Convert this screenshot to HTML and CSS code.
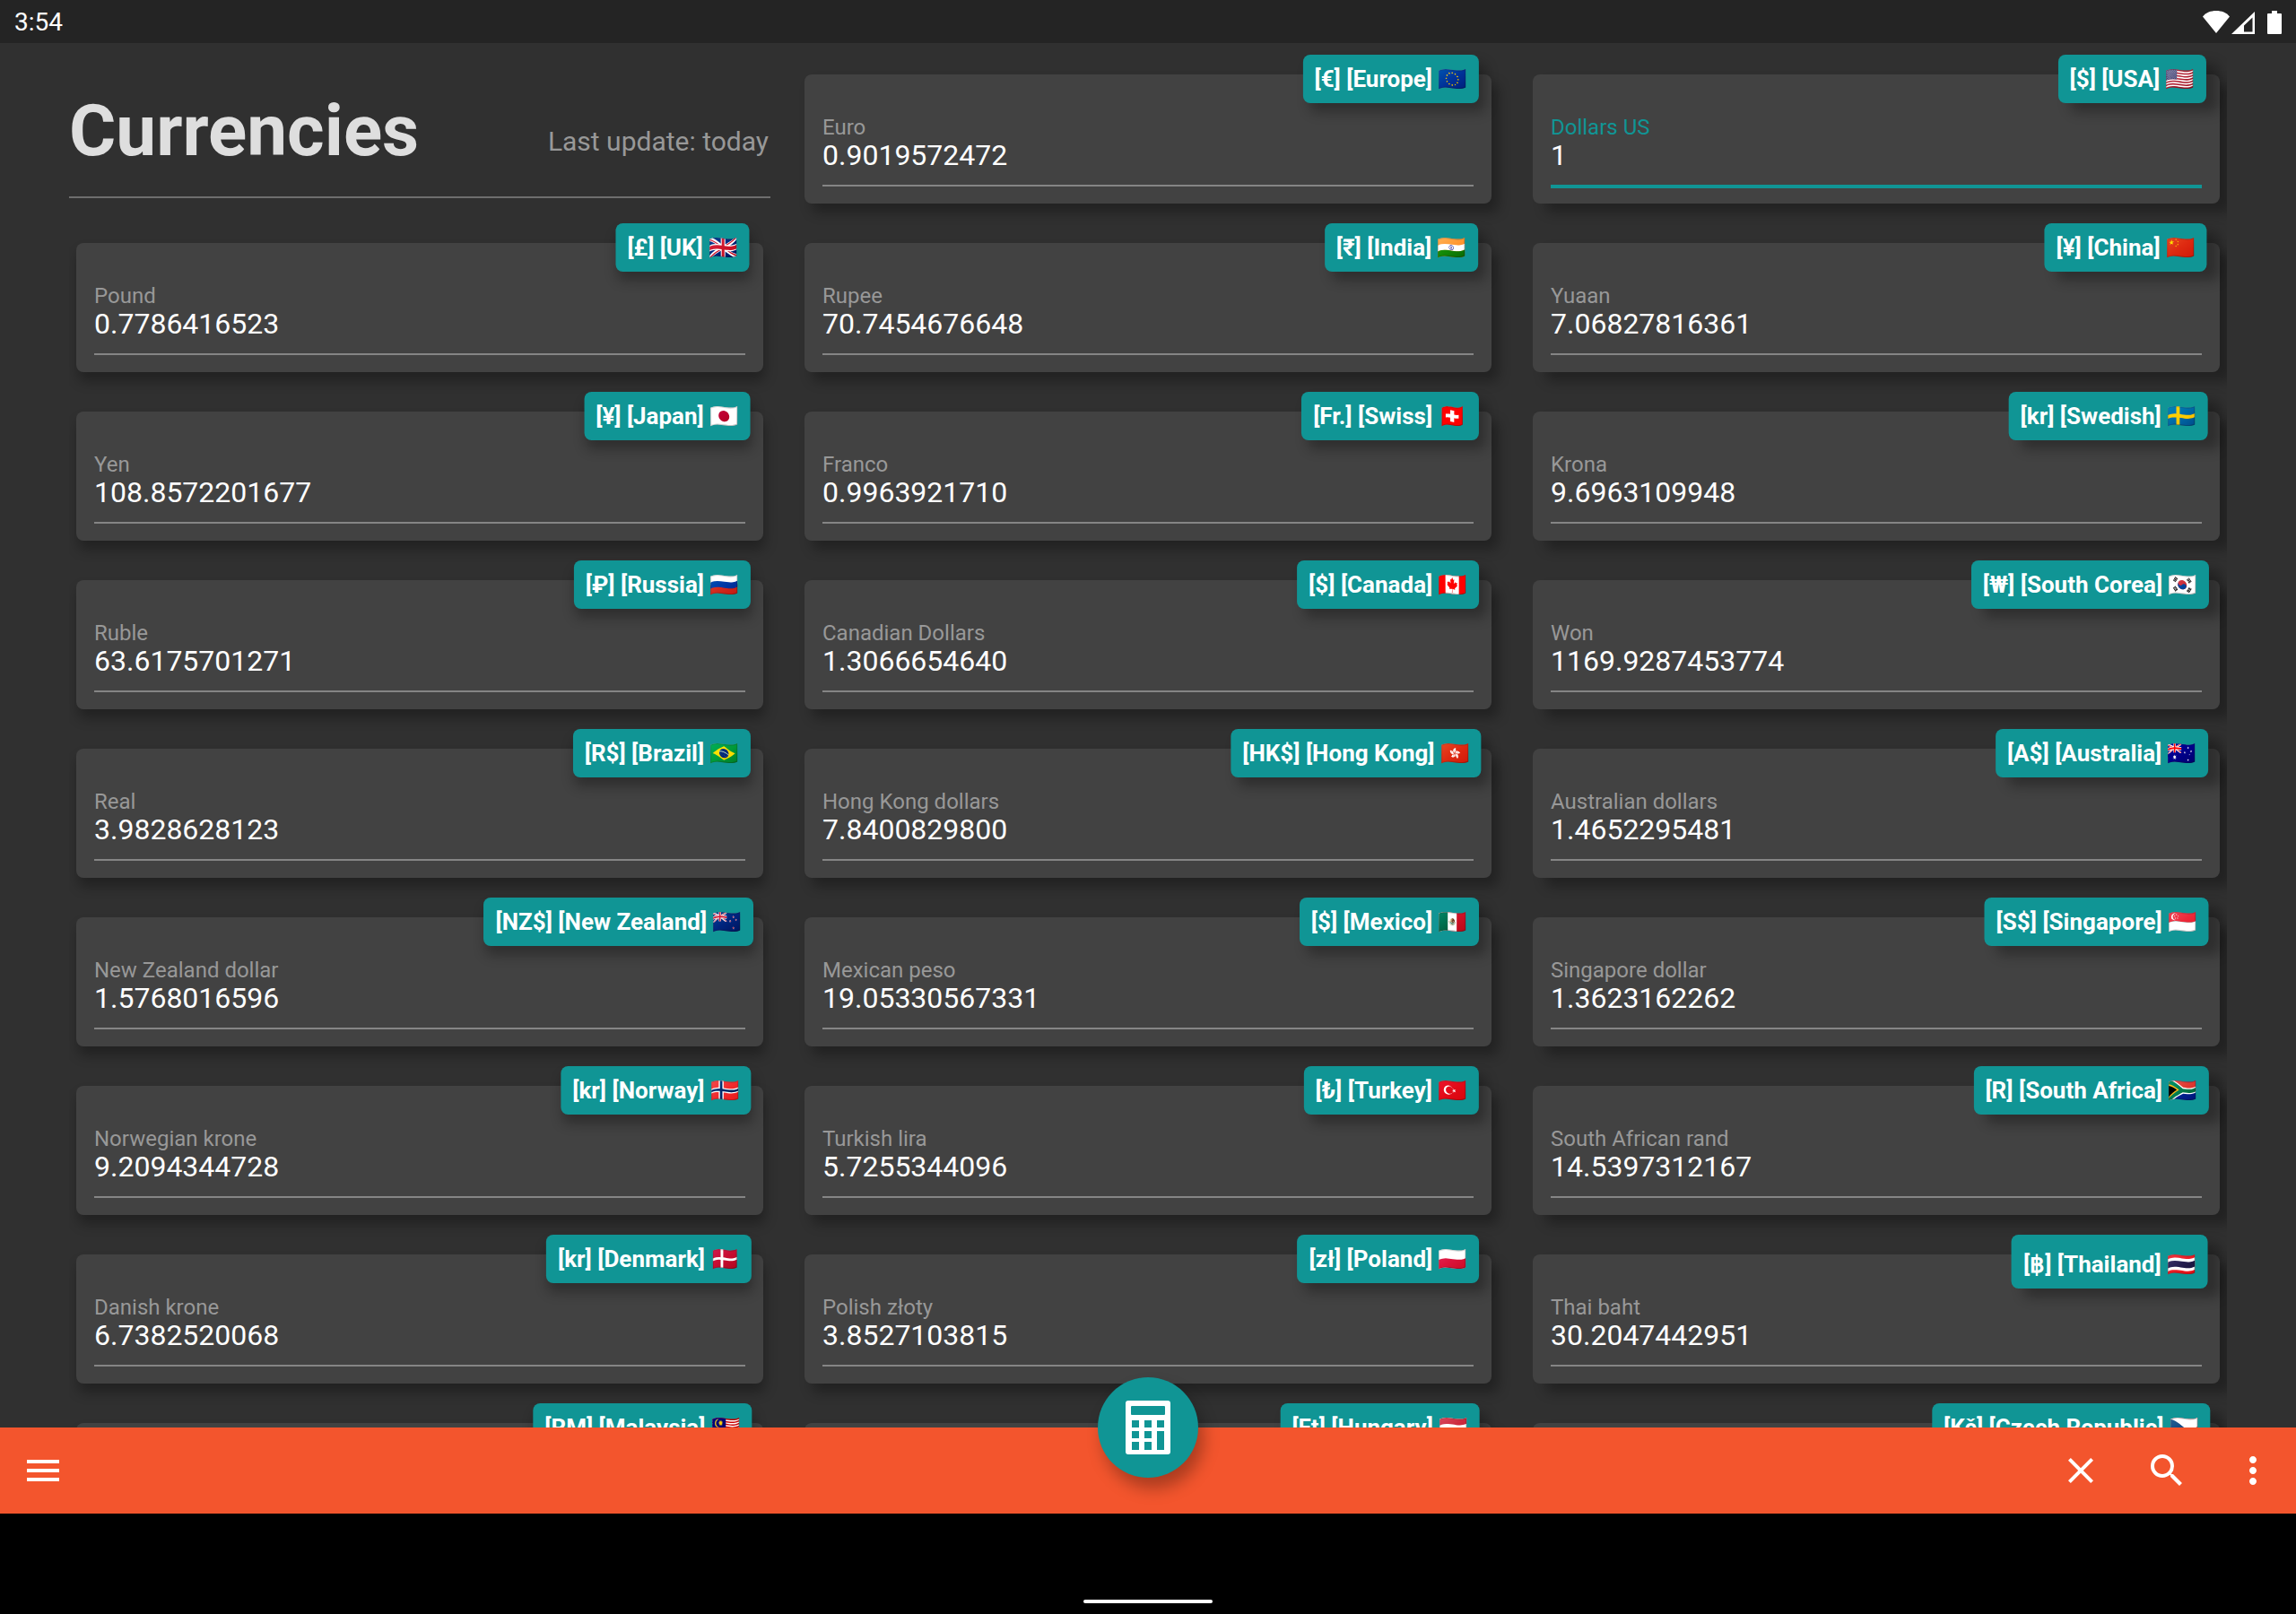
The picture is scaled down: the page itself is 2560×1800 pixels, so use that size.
FILE: index.html
```html
<!DOCTYPE html>
<html lang="en">
<head>
<meta charset="utf-8">
<meta name="viewport" content="width=device-width, initial-scale=1">
<title>Currencies</title>
<link rel="stylesheet" href="styles.css">
</head>
<body>
<header class="status">
  <span class="status-time">3:54</span>
  <svg class="status-icons" viewBox="0 0 88 26" aria-hidden="true">
    <path d="M15 25 0 6.500C3.500 2 9 0 15 0s11.500 2 15 6.500z"/>
    <path fill-rule="evenodd" d="M32 26 58 1v25zM46 23.500h9.500V7.500L46 16.500z"/>
    <path d="M77 0h6v3h4q1 0 1 1v21q0 1-1 1H73q-1 0-1-1V4q0-1 1-1h4z"/>
  </svg>
</header>
<main class="content">
  <section class="grid">
    <header class="heading"><h1 class="title">Currencies</h1><p class="updated">Last update: today</p></header>
    <article class="card"><span class="chip">[€] [Europe] <span class="flag">🇪🇺</span></span><label class="name" for="eur">Euro</label><input class="value" id="eur" value="0.9019572472"></article>
    <article class="card active"><span class="chip">[$] [USA] <span class="flag">🇺🇸</span></span><label class="name" for="usd">Dollars US</label><input class="value" id="usd" value="1"></article>
    <article class="card"><span class="chip">[£] [UK] <span class="flag">🇬🇧</span></span><label class="name" for="gbp">Pound</label><input class="value" id="gbp" value="0.7786416523"></article>
    <article class="card"><span class="chip">[₹] [India] <span class="flag">🇮🇳</span></span><label class="name" for="inr">Rupee</label><input class="value" id="inr" value="70.7454676648"></article>
    <article class="card"><span class="chip">[¥] [China] <span class="flag">🇨🇳</span></span><label class="name" for="cny">Yuaan</label><input class="value" id="cny" value="7.06827816361"></article>
    <article class="card"><span class="chip">[¥] [Japan] <span class="flag">🇯🇵</span></span><label class="name" for="jpy">Yen</label><input class="value" id="jpy" value="108.8572201677"></article>
    <article class="card"><span class="chip">[Fr.] [Swiss] <span class="flag">🇨🇭</span></span><label class="name" for="chf">Franco</label><input class="value" id="chf" value="0.9963921710"></article>
    <article class="card"><span class="chip">[kr] [Swedish] <span class="flag">🇸🇪</span></span><label class="name" for="sek">Krona</label><input class="value" id="sek" value="9.6963109948"></article>
    <article class="card"><span class="chip">[₽] [Russia] <span class="flag">🇷🇺</span></span><label class="name" for="rub">Ruble</label><input class="value" id="rub" value="63.6175701271"></article>
    <article class="card"><span class="chip">[$] [Canada] <span class="flag">🇨🇦</span></span><label class="name" for="cad">Canadian Dollars</label><input class="value" id="cad" value="1.3066654640"></article>
    <article class="card"><span class="chip">[₩] [South Corea] <span class="flag">🇰🇷</span></span><label class="name" for="krw">Won</label><input class="value" id="krw" value="1169.9287453774"></article>
    <article class="card"><span class="chip">[R$] [Brazil] <span class="flag">🇧🇷</span></span><label class="name" for="brl">Real</label><input class="value" id="brl" value="3.9828628123"></article>
    <article class="card"><span class="chip">[HK$] [Hong Kong] <span class="flag">🇭🇰</span></span><label class="name" for="hkd">Hong Kong dollars</label><input class="value" id="hkd" value="7.8400829800"></article>
    <article class="card"><span class="chip">[A$] [Australia] <span class="flag">🇦🇺</span></span><label class="name" for="aud">Australian dollars</label><input class="value" id="aud" value="1.4652295481"></article>
    <article class="card"><span class="chip">[NZ$] [New Zealand] <span class="flag">🇳🇿</span></span><label class="name" for="nzd">New Zealand dollar</label><input class="value" id="nzd" value="1.5768016596"></article>
    <article class="card"><span class="chip">[$] [Mexico] <span class="flag">🇲🇽</span></span><label class="name" for="mxn">Mexican peso</label><input class="value" id="mxn" value="19.05330567331"></article>
    <article class="card"><span class="chip">[S$] [Singapore] <span class="flag">🇸🇬</span></span><label class="name" for="sgd">Singapore dollar</label><input class="value" id="sgd" value="1.3623162262"></article>
    <article class="card"><span class="chip">[kr] [Norway] <span class="flag">🇳🇴</span></span><label class="name" for="nok">Norwegian krone</label><input class="value" id="nok" value="9.2094344728"></article>
    <article class="card"><span class="chip">[₺] [Turkey] <span class="flag">🇹🇷</span></span><label class="name" for="try">Turkish lira</label><input class="value" id="try" value="5.7255344096"></article>
    <article class="card"><span class="chip">[R] [South Africa] <span class="flag">🇿🇦</span></span><label class="name" for="zar">South African rand</label><input class="value" id="zar" value="14.5397312167"></article>
    <article class="card"><span class="chip">[kr] [Denmark] <span class="flag">🇩🇰</span></span><label class="name" for="dkk">Danish krone</label><input class="value" id="dkk" value="6.7382520068"></article>
    <article class="card"><span class="chip">[zł] [Poland] <span class="flag">🇵🇱</span></span><label class="name" for="pln">Polish złoty</label><input class="value" id="pln" value="3.8527103815"></article>
    <article class="card"><span class="chip chip-tall">[฿] [Thailand] <span class="flag">🇹🇭</span></span><label class="name" for="thb">Thai baht</label><input class="value" id="thb" value="30.2047442951"></article>
    <article class="card"><label class="chip" for="myr">[RM] [Malaysia] <span class="flag">🇲🇾</span></label><input class="value" id="myr"></article>
    <article class="card"><label class="chip" for="huf">[Ft] [Hungary] <span class="flag">🇭🇺</span></label><input class="value" id="huf"></article>
    <article class="card"><label class="chip" for="czk">[Kč] [Czech Republic] <span class="flag">🇨🇿</span></label><input class="value" id="czk"></article>
  </section>
</main>
<footer class="appbar">
  <button class="icon-button" type="button" aria-label="Menu"><svg viewBox="0 0 24 24"><path d="M3 18h18v-2H3v2zm0-5h18v-2H3v2zm0-7v2h18V6H3z"/></svg></button>
  <div class="actions">
    <button class="icon-button" type="button" aria-label="Clear"><svg viewBox="0 0 24 24"><path d="M19 6.410 17.590 5 12 10.590 6.410 5 5 6.410 10.590 12 5 17.590 6.410 19 12 13.410 17.590 19 19 17.590 13.410 12z"/></svg></button>
    <button class="icon-button" type="button" aria-label="Search"><svg viewBox="0 0 24 24"><path d="M15.500 14h-.79l-.28-.27A6.471 6.471 0 0 0 16 9.500 6.500 6.500 0 1 0 9.500 16c1.610 0 3.090-.59 4.230-1.570l.27.28v.79l5 4.990L20.490 19l-4.990-5zm-6 0C7.010 14 5 11.990 5 9.500S7.010 5 9.500 5 14 7.010 14 9.500 11.990 14 9.500 14z"/></svg></button>
    <button class="icon-button" type="button" aria-label="More"><svg viewBox="0 0 24 24"><path d="M12 8c1.100 0 2-.9 2-2s-.9-2-2-2-2 .9-2 2 .9 2 2 2zm0 2c-1.100 0-2 .9-2 2s.9 2 2 2 2-.9 2-2-.9-2-2-2zm0 6c-1.100 0-2 .9-2 2s.9 2 2 2 2-.9 2-2-.9-2-2-2z"/></svg></button>
  </div>
  <button class="fab" type="button" aria-label="Calculator"><svg viewBox="0 0 50 60"><path fill-rule="evenodd" d="M3 0h44q3 0 3 3v54q0 3-3 3H3q-3 0-3-3V3q0-3 3-3zM6 7v8q0 1 1 1h36q1 0 1-1V7q0-1-1-1H7q-1 0-1 1zM7 22v8h8v-8zM21 22v8h8v-8zM35 22v8h8v-8zM7 34v8h8v-8zM21 34v8h8v-8zM7 46v9h8v-9zM21 46v9h8v-9zM35 34v21h8V34z"/></svg></button>
</footer>
<div class="gesture"><span class="pill"></span></div>
</body>
</html>
```
FILE: styles.css
```css
* { box-sizing: border-box; }
body {
  margin: 0;
  height: 100vh;
  display: flex;
  flex-direction: column;
  overflow: hidden;
  background: #303030;
  color: #fff;
  font-family: Roboto, "Noto Sans", "Noto Color Emoji", sans-serif;
}
.status {
  flex: none;
  height: 48px;
  padding: 2px 16px 0;
  display: flex;
  align-items: center;
  justify-content: space-between;
  background: #242424;
}
.status-time { font-size: 28px; line-height: 34px; }
.status-icons { width: 88px; height: 26px; fill: #fff; }
.content {
  flex: 1;
  min-height: 0;
  margin: 0 77px;
  padding: 35px 8px 0;
  overflow: hidden;
}
.grid {
  display: grid;
  grid-template-columns: repeat(3, 1fr);
  column-gap: 46px;
  row-gap: 44px;
}
.heading {
  height: 138px;
  margin: 0 -8px;
  padding-bottom: 26px;
  display: flex;
  align-items: flex-end;
  justify-content: space-between;
  border-bottom: 2px solid #6e6e6e;
}
.title { margin: 0; font-size: 80px; line-height: 94px; color: #dedede; }
.updated { margin: 0 2px 17px 0; font-size: 30px; line-height: 36px; color: #989898; }
.card {
  position: relative;
  height: 144px;
  padding: 47px 20px 0;
  display: flex;
  flex-direction: column;
  justify-content: flex-start;
  border-radius: 8px;
  background: #424242;
  box-shadow: 2px 10px 14px rgba(0, 0, 0, .3);
}
.chip {
  position: absolute;
  top: -22px;
  right: 20px;
  padding: 12px 13px;
  border-radius: 8px;
  transform: translateX(3%);
  background: #109595;
  box-shadow: 2px 10px 14px rgba(0, 0, 0, .3);
  font-size: 26px;
  line-height: 30px;
  font-weight: 700;
  white-space: nowrap;
}
.chip-tall { padding-top: 18px; }
.card:nth-child(3n+2), .card:nth-child(3n+2) .chip { box-shadow: 8px 10px 14px rgba(0, 0, 0, .3); }
.card:nth-child(3n), .card:nth-child(3n) .chip { box-shadow: 14px 10px 14px rgba(0, 0, 0, .3); }
.name { font-size: 24px; line-height: 24px; color: #989898; }
.value {
  width: 100%;
  height: 54px;
  margin: 0;
  padding: 0 0 14px;
  border: 0;
  border-bottom: 2px solid #858585;
  background: none;
  color: #fff;
  font: 32px/38px Roboto, sans-serif;
  outline: 0;
}
.active .name { color: #109595; }
.active .value { height: 56px; border-bottom: 4px solid #109595; }
.appbar {
  position: relative;
  flex: none;
  height: 96px;
  padding: 0 24px;
  display: flex;
  align-items: center;
  justify-content: space-between;
  background: #f3552d;
}
.actions { display: flex; gap: 48px; }
.icon-button { width: 48px; height: 48px; padding: 0; border: 0; background: none; }
.icon-button svg { display: block; width: 48px; height: 48px; fill: #fff; }
.fab {
  position: absolute;
  top: -56px;
  left: calc(50% - 56px);
  width: 112px;
  height: 112px;
  padding: 0;
  display: grid;
  place-items: center;
  border: 0;
  border-radius: 50%;
  background: #109595;
  box-shadow: 6px 12px 18px rgba(0, 0, 0, .3);
}
.fab svg { width: 50px; height: 60px; fill: #fff; }
.gesture {
  flex: none;
  height: 112px;
  padding-bottom: 12px;
  display: flex;
  align-items: flex-end;
  justify-content: center;
  background: #000;
}
.pill { width: 144px; height: 4px; border-radius: 2px; background: #fff; }
```
